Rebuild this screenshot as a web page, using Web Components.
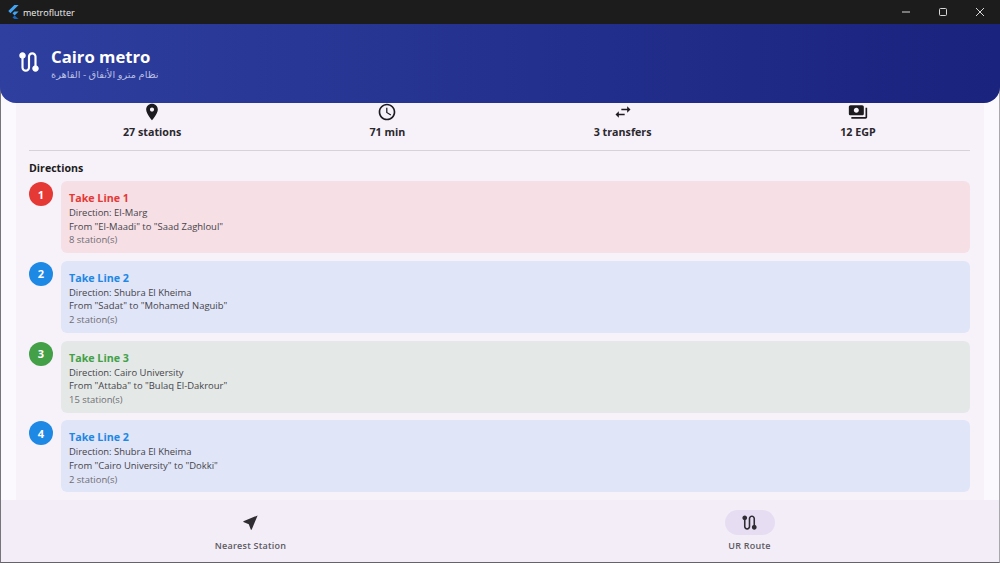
<!DOCTYPE html>
<html lang="en">
<head>
<meta charset="utf-8">
<title>metroflutter</title>
<style>
    html, body { margin: 0; height: 100%; overflow: hidden; }
    body { font-family: "Open Sans", "Noto Sans", "Liberation Sans", sans-serif; color: #1d1b20; }
</style>
</head>
<body>
<metro-app>
    <title-bar slot="top" title="metroflutter"></title-bar>
    <route-header slot="top" name="Cairo metro" sub="نظام مترو الأنفاق - القاهرة"></route-header>

    <stat-row>
        <stat-item icon="place" label="27 stations"></stat-item>
        <stat-item icon="clock" label="71 min"></stat-item>
        <stat-item icon="swap" label="3 transfers"></stat-item>
        <stat-item icon="payments" label="12 EGP"></stat-item>
    </stat-row>

    <section-title>Directions</section-title>

    <step-card number="1" color="#e53935" bg="#f6dfe5" title="Take Line 1" stations="8 station(s)">
        <span>Direction: El-Marg</span>
        <span>From "El-Maadi" to "Saad Zaghloul"</span>
    </step-card>
    <step-card number="2" color="#1e88e5" bg="#e0e5f8" title="Take Line 2" stations="2 station(s)">
        <span>Direction: Shubra El Kheima</span>
        <span>From "Sadat" to "Mohamed Naguib"</span>
    </step-card>
    <step-card number="3" color="#43a047" bg="#e4e9e7" title="Take Line 3" stations="15 station(s)">
        <span>Direction: Cairo University</span>
        <span>From "Attaba" to "Bulaq El-Dakrour"</span>
    </step-card>
    <step-card number="4" color="#1e88e5" bg="#e0e5f8" title="Take Line 2" stations="2 station(s)">
        <span>Direction: Shubra El Kheima</span>
        <span>From "Cairo University" to "Dokki"</span>
    </step-card>

    <nav-item slot="nav" icon="near" label="Nearest Station"></nav-item>
    <nav-item slot="nav" icon="route" label="UR Route" active></nav-item>
</metro-app>

<script>
const ICONS = {
    place: 'M12 2C8.13 2 5 5.13 5 9c0 5.25 7 13 7 13s7-7.75 7-13c0-3.87-3.13-7-7-7zm0 9.5c-1.38 0-2.5-1.12-2.5-2.5s1.12-2.5 2.5-2.5 2.5 1.12 2.5 2.5-1.12 2.5-2.5 2.5z',
    clock: 'M11.99 2C6.47 2 2 6.48 2 12s4.47 10 9.99 10C17.52 22 22 17.52 22 12S17.52 2 11.99 2zM12 20c-4.42 0-8-3.58-8-8s3.58-8 8-8 8 3.58 8 8-3.58 8-8 8zm.5-13H11v6l5.25 3.15.75-1.23-4.5-2.67z',
    swap: 'M6.99 11L3 15l3.99 4v-3H14v-2H6.99v-3zM21 9l-4-4v3h-7v2h7v3l4-4z',
    payments: 'M19 14V6c0-1.1-.9-2-2-2H3c-1.1 0-2 .9-2 2v8c0 1.1.9 2 2 2h14c1.1 0 2-.9 2-2zm-9-1c-1.66 0-3-1.34-3-3s1.34-3 3-3 3 1.34 3 3-1.34 3-3 3zm13-6v11c0 1.1-.9 2-2 2H4v-2h17V7h2z',
    near: 'M21 3L3 10.53v.98l6.84 2.65L12.48 21h.98L21 3z',
    route: 'M19 15.18V7c0-2.21-1.79-4-4-4s-4 1.79-4 4v10c0 1.1-.9 2-2 2s-2-.9-2-2V8.82C8.16 8.4 9 7.3 9 6c0-1.66-1.34-3-3-3S3 4.34 3 6c0 1.3.84 2.4 2 2.82V17c0 2.21 1.79 4 4 4s4-1.79 4-4V7c0-1.1.9-2 2-2s2 .9 2 2v8.18c-1.16.41-2 1.51-2 2.82 0 1.66 1.34 3 3 3s3-1.34 3-3c0-1.3-.84-2.4-2-2.82z'
};

function iconSvg(name, size) {
    return `<svg width="${size}" height="${size}" viewBox="0 0 24 24" fill="currentColor"><path d="${ICONS[name]}"/></svg>`;
}

class MetroApp extends HTMLElement {
    constructor() {
        super();
        this.attachShadow({ mode: 'open' });
    }

    connectedCallback() {
        this.shadowRoot.innerHTML = `
            <style>
                :host {
                    display: flex;
                    flex-direction: column;
                    height: 563px;
                    box-sizing: border-box;
                    background: #fbf8fe;
                    border-left: 1px solid #77757c;
                    border-right: 1px solid #a9a8ad;
                    border-bottom: 1px solid #66646b;
                }
                .top { position: relative; z-index: 2; }
                .main {
                    flex: 1;
                    min-height: 0;
                    overflow: hidden;
                    margin: 0 15px;
                    padding: 0 14px 0 13px;
                    background: #f7f2fa;
                    display: flex;
                    flex-direction: column;
                }
                .nav {
                    height: 62px;
                    flex-shrink: 0;
                    display: grid;
                    grid-template-columns: 1fr 1fr;
                    background: #f3edf7;
                }
            </style>
            <div class="top"><slot name="top"></slot></div>
            <div class="main"><slot></slot></div>
            <div class="nav"><slot name="nav"></slot></div>
        `;
    }
}

class TitleBar extends HTMLElement {
    constructor() {
        super();
        this.attachShadow({ mode: 'open' });
    }

    connectedCallback() {
        this.shadowRoot.innerHTML = `
            <style>
                :host {
                    display: flex;
                    align-items: center;
                    height: 24px;
                    padding-right: 1.5px;
                    background: #1c1c1c;
                    color: #f2f2f2;
                    font-size: 9px;
                    margin-left: -1px;
                    margin-right: -1px;
                }
                .logo { margin-left: 7px; margin-right: 4px; }
                .title { flex: 1; }
                .btn { width: 37px; display: flex; justify-content: center; align-items: center; }
            </style>
            <svg class="logo" width="12" height="14" viewBox="0 0 12 14">
                <polygon points="7.4,0 11.6,0 3.4,8.2 1.3,6.1" fill="#42a5f5"/>
                <polygon points="7.4,6.4 11.6,6.4 7.6,10.4 5.5,8.3" fill="#42a5f5"/>
                <polygon points="5.5,12.5 7.6,10.4 11.6,14 7.4,14" fill="#1565c0"/>
            </svg>
            <span class="title">${this.getAttribute('title')}</span>
            <span class="btn"><svg width="10" height="10" viewBox="0 0 10 10"><path d="M1 5h8" stroke="#d8d8d8" fill="none"/></svg></span>
            <span class="btn"><svg width="10" height="10" viewBox="0 0 10 10"><rect x="1.5" y="1.5" width="7" height="7" rx="1" stroke="#d8d8d8" fill="none"/></svg></span>
            <span class="btn"><svg width="10" height="10" viewBox="0 0 10 10"><path d="M1 1l8 8M9 1l-8 8" stroke="#d8d8d8" fill="none"/></svg></span>
        `;
    }
}

class RouteHeader extends HTMLElement {
    constructor() {
        super();
        this.attachShadow({ mode: 'open' });
    }

    connectedCallback() {
        this.shadowRoot.innerHTML = `
            <style>
                :host {
                    display: flex;
                    align-items: center;
                    gap: 9px;
                    height: 79px;
                    box-sizing: border-box;
                    padding: 0 0 0 16px;
                    background: linear-gradient(90deg, #2e3f9f, #1a237e);
                    border-radius: 0 0 16px 16px;
                    color: #fff;
                    margin-left: -1px;
                    margin-right: -1px;
                }
                svg { flex-shrink: 0; margin-top: -3px; }
                .name { font-size: 16.7px; font-weight: 700; line-height: 22px; }
                .sub {
                    font-size: 9.8px;
                    line-height: 14px;
                    color: #b9bfe3;
                    font-family: "Noto Sans", "DejaVu Sans", sans-serif;
                }
            </style>
            ${iconSvg('route', 26)}
            <div>
                <div class="name">${this.getAttribute('name')}</div>
                <div class="sub" dir="rtl">${this.getAttribute('sub')}</div>
            </div>
        `;
    }
}

class StatRow extends HTMLElement {
    constructor() {
        super();
        this.attachShadow({ mode: 'open' });
    }

    connectedCallback() {
        this.shadowRoot.innerHTML = `
            <style>
                :host {
                    display: grid;
                    grid-template-columns: repeat(4, 1fr);
                    height: 47px;
                    flex-shrink: 0;
                    border-bottom: 1px solid #d5d2d9;
                }
            </style>
            <slot></slot>
        `;
    }
}

class StatItem extends HTMLElement {
    constructor() {
        super();
        this.attachShadow({ mode: 'open' });
    }

    connectedCallback() {
        this.shadowRoot.innerHTML = `
            <style>
                :host {
                    display: flex;
                    flex-direction: column;
                    align-items: center;
                    padding-left: 11px;
                    font-size: 10.7px;
                    font-weight: 700;
                    color: #2a282d;
                }
                svg { display: block; color: #1d1b20; margin-top: -1px; }
                span { line-height: 15px; margin-top: 3px; }
            </style>
            ${iconSvg(this.getAttribute('icon'), 20)}
            <span>${this.getAttribute('label')}</span>
        `;
    }
}

class SectionTitle extends HTMLElement {
    constructor() {
        super();
        this.attachShadow({ mode: 'open' });
    }

    connectedCallback() {
        this.shadowRoot.innerHTML = `
            <style>
                :host {
                    display: block;
                    flex-shrink: 0;
                    font-size: 10.6px;
                    font-weight: 700;
                    line-height: 16px;
                    margin: 9px 0 5px;
                }
            </style>
            <slot></slot>
        `;
    }
}

class StepCard extends HTMLElement {
    constructor() {
        super();
        this.attachShadow({ mode: 'open' });
    }

    connectedCallback() {
        const color = this.getAttribute('color');
        this.shadowRoot.innerHTML = `
            <style>
                :host {
                    display: flex;
                    gap: 8px;
                    flex-shrink: 0;
                    margin-bottom: 7.8px;
                }
                .num {
                    width: 24px;
                    height: 24px;
                    margin-top: 1px;
                    border-radius: 50%;
                    flex-shrink: 0;
                    background: ${color};
                    color: #fff;
                    font-size: 11px;
                    font-weight: 700;
                    display: flex;
                    justify-content: center;
                    align-items: center;
                }
                .card {
                    flex: 1;
                    height: 72px;
                    box-sizing: border-box;
                    padding: 10px 8px 0;
                    border-radius: 6px;
                    background: ${this.getAttribute('bg')};
                    display: flex;
                    flex-direction: column;
                }
                .title { font-size: 10.7px; font-weight: 700; line-height: 14px; color: ${color}; margin-bottom: 1px; }
                .lines { font-size: 9.45px; line-height: 13.6px; color: #45434a; display: flex; flex-direction: column; }
                .stations { font-size: 9.45px; line-height: 13.6px; color: #6f6d74; }
                ::slotted(span) { display: block; }
            </style>
            <div class="num">${this.getAttribute('number')}</div>
            <div class="card">
                <div class="title">${this.getAttribute('title')}</div>
                <div class="lines"><slot></slot></div>
                <div class="stations">${this.getAttribute('stations')}</div>
            </div>
        `;
    }
}

class NavItem extends HTMLElement {
    constructor() {
        super();
        this.attachShadow({ mode: 'open' });
    }

    connectedCallback() {
        const active = this.hasAttribute('active');
        this.shadowRoot.innerHTML = `
            <style>
                :host {
                    display: flex;
                    flex-direction: column;
                    align-items: center;
                    padding-top: 10px;
                    font-size: 9px;
                    font-weight: 600;
                    color: #5c5a62;
                }
                .pill {
                    width: 50px;
                    height: 25px;
                    border-radius: 13px;
                    display: flex;
                    justify-content: center;
                    align-items: center;
                    background: ${active ? '#e6ddf3' : 'transparent'};
                    color: #2f2d33;
                }
                span { line-height: 14px; margin-top: 4px; letter-spacing: .25px; }
            </style>
            <div class="pill">${iconSvg(this.getAttribute('icon'), 19)}</div>
            <span>${this.getAttribute('label')}</span>
        `;
    }
}

customElements.define('metro-app', MetroApp);
customElements.define('title-bar', TitleBar);
customElements.define('route-header', RouteHeader);
customElements.define('stat-row', StatRow);
customElements.define('stat-item', StatItem);
customElements.define('section-title', SectionTitle);
customElements.define('step-card', StepCard);
customElements.define('nav-item', NavItem);
</script>
</body>
</html>
